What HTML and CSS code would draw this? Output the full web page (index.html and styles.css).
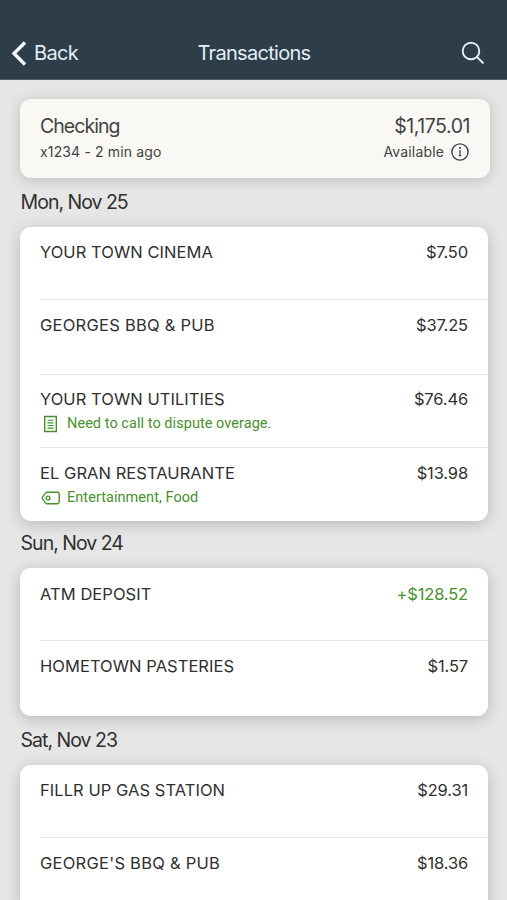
FILE: index.html
```html
<!DOCTYPE html>
<html lang="en">
<head>
<meta charset="utf-8">
<title>Transactions</title>
<link rel="stylesheet" href="styles.css">
</head>
<body>
<header class="bar">
  <div class="back">
    <svg class="chevron" width="16" height="27" viewBox="0 0 16 27"><path d="M14 2.500 3 13.500l11 11"/></svg>
    <span class="back-label">Back</span>
  </div>
  <h1 class="title">Transactions</h1>
  <svg class="search" width="24" height="24" viewBox="0 0 24 24"><circle cx="10" cy="10" r="8.300"/><path d="m16 16 6.500 6.500"/></svg>
</header>
<main class="content">
  <section class="account">
    <div class="line account-main"><span class="account-name">Checking</span><span class="balance">$1,175.01</span></div>
    <div class="line account-sub"><span class="updated">x1234 - 2 min ago</span>
      <span class="available">Available
        <svg class="info" width="20" height="20" viewBox="0 0 20 20"><circle cx="10" cy="10" r="8.100"/><path class="stem" d="M10 8.300v5.600M9 8.800h1M8.700 13.700h2.600"/><circle class="dot" cx="10" cy="6" r="1.100"/></svg>
      </span>
    </div>
  </section>

  <h2 class="date">Mon, Nov 25</h2>
  <section class="group">
    <article class="row"><div class="line"><span>YOUR TOWN CINEMA</span><span class="amount">$7.50</span></div></article>
    <article class="row tall"><div class="line"><span class="wide">GEORGES BBQ &amp; PUB</span><span class="amount">$37.25</span></div></article>
    <article class="row raised"><div class="line"><span>YOUR TOWN UTILITIES</span><span class="amount">$76.46</span></div>
      <div class="note"><svg width="20" height="18" viewBox="0 0 20 18"><path d="M4.700 1.500h11.600v15H4.700z"/><path class="rules" d="M7.500 5.300h6M7.500 7.900h6M7.500 10.500h6M7.500 13.100h6"/></svg><span>Need to call to dispute overage.</span></div>
    </article>
    <article class="row"><div class="line"><span>EL GRAN RESTAURANTE</span><span class="amount">$13.98</span></div>
      <div class="note"><svg width="20" height="18" viewBox="0 0 20 18"><path d="M7 3.300h10.500q1.700 0 1.700 1.700v8q0 1.700-1.700 1.700H7q-.8 0-1.300-.6L2.500 9.900q-.7-.9 0-1.800L5.700 3.900Q6.200 3.300 7 3.300z"/><circle cx="8" cy="9" r="1.900"/></svg><span>Entertainment, Food</span></div>
    </article>
  </section>

  <h2 class="date">Sun, Nov 24</h2>
  <section class="group">
    <article class="row lowered"><div class="line"><span>ATM DEPOSIT</span><span class="amount credit">+$128.52</span></div></article>
    <article class="row tall"><div class="line"><span>HOMETOWN PASTERIES</span><span class="amount">$1.57</span></div></article>
  </section>

  <h2 class="date last">Sat, Nov 23</h2>
  <section class="group">
    <article class="row"><div class="line"><span>FILLR UP GAS STATION</span><span class="amount">$29.31</span></div></article>
    <article class="row"><div class="line"><span class="wide">GEORGE'S BBQ &amp; PUB</span><span class="amount">$18.36</span></div></article>
  </section>
</main>
</body>
</html>
```
FILE: styles.css
```css
* { box-sizing: border-box; }
html, body { height: 900px; overflow: hidden; }
body {
  margin: 0;
  background: #e6e6e6;
  color: #303030;
  font-family: Inter, "Liberation Sans", sans-serif;
}
svg { display: block; flex: none; fill: none; stroke: currentColor; }
.bar {
  display: grid;
  grid-template-columns: 1fr auto 1fr;
  align-items: center;
  height: 80px;
  padding: 27px 22px 0 11px;
  background: #2d3d49;
  border-bottom: 1px solid #53616b;
  color: #e4eef6;
}
.back { display: flex; align-items: center; gap: 7px; }
.chevron { stroke-width: 3.4; color: #f4faff; }
.back-label, .title { font-size: 20px; font-weight: 400; line-height: 26px; letter-spacing: -0.7px; }
.title { margin: 0 -6px 0 6px; }
.search { justify-self: end; stroke-width: 1.9; }
.content { padding: 19px 19px 0 20px; }
.account {
  width: 470px;
  height: 79px;
  padding: 15px 20px 0;
  border-radius: 11px;
  background: #f9f8f5;
  box-shadow: 0 2px 14px rgba(0, 0, 0, 0.18);
  color: #434343;
}
.line { display: flex; justify-content: space-between; align-items: center; }
.account-main { height: 24px; font-size: 19.5px; letter-spacing: -0.45px; }
.account-name { letter-spacing: -0.95px; }
.account-sub { height: 27px; font-size: 14px; letter-spacing: 0.15px; }
.available { display: flex; align-items: center; gap: 6px; }
.info { stroke-width: 1.4; }
.stem { stroke-width: 1.2; }
.dot { fill: currentColor; stroke: none; }
.date {
  height: 49px;
  margin: 0;
  padding: 11px 0 0 0.5px;
  font-size: 19.5px;
  font-weight: 400;
  line-height: 26px;
  letter-spacing: -0.95px;
  word-spacing: -0.2px;
}
.group + .date { height: 47px; padding-top: 9px; }
.group + .date.last { height: 49px; padding-top: 11px; }
.group {
  width: 468px;
  padding-left: 20px;
  border-radius: 11px;
  background: #fff;
  box-shadow: 0 3px 15px rgba(0, 0, 0, 0.2);
}
.row { height: 73px; padding: 13px 20px 0 0; border-bottom: 1px solid #e7e7e7; font-size: 16.5px; letter-spacing: 0.05px; }
.row.tall { height: 75px; }
.row.raised { padding-top: 12px; }
.row.lowered { padding-top: 14px; }
.row:last-child { border-bottom: 0; }
.row .line { height: 24px; }
.wide { letter-spacing: 0.25px; }
.amount { letter-spacing: -0.15px; }
.credit { color: #48912c; }
.note {
  display: flex;
  align-items: center;
  gap: 7px;
  height: 25px;
  color: #48912c;
  font-family: Roboto, sans-serif;
  font-size: 14.5px;
  letter-spacing: 0.05px;
}
.note svg { stroke-width: 1.4; }
.note .rules { stroke-width: 1.1; }
```
